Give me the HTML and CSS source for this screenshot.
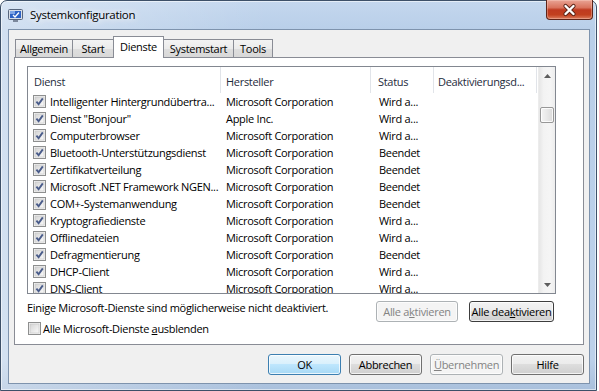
FILE: index.html
```html
<!DOCTYPE html>
<html lang="de">
<head>
<meta charset="utf-8">
<title>Systemkonfiguration</title>
<link rel="stylesheet" href="styles.css">
</head>
<body>
<svg class="defs" width="0" height="0" aria-hidden="true">
  <defs>
    <linearGradient id="cbfill" x1="0" y1="0" x2="1" y2="1">
      <stop offset="0" stop-color="#d4d4d4"/>
      <stop offset="1" stop-color="#fafafa"/>
    </linearGradient>
    <symbol id="box" viewBox="0 0 13 13">
      <rect x="0.5" y="0.5" width="12" height="12" fill="#f4f4f4" stroke="#8e8f8f"/>
      <rect x="2" y="2" width="9" height="9" fill="url(#cbfill)" stroke="#c4c4c4" stroke-width="0.6"/>
    </symbol>
    <symbol id="chk" viewBox="0 0 13 13">
      <use href="#box"/>
      <path d="M3.4 6.6 L5.6 9.2 L9.8 3.4" fill="none" stroke="#4a5c8a" stroke-width="1.9"/>
    </symbol>
  </defs>
</svg>
<div class="window">
  <div class="titlebar">
    <svg class="appicon" width="15" height="14" viewBox="0 0 15 14">
      <rect x="0.5" y="0.5" width="14" height="10" rx="1" fill="#d9dfe8" stroke="#56657d"/>
      <rect x="2" y="2" width="11" height="7" fill="#2e63c4"/>
      <rect x="2" y="2" width="5" height="3" fill="#7fa6e6"/>
      <path d="M5 6 L7 8 L11 3.5" fill="none" stroke="#ffffff" stroke-width="1.3"/>
      <rect x="5" y="11" width="5" height="2" fill="#7c889c"/>
    </svg>
    <span class="title">Systemkonfiguration</span>
    <div class="close">
      <svg width="45" height="18" viewBox="0 0 45 18">
        <path d="M18.5 5 L26.5 13 M26.5 5 L18.5 13" stroke="#5a2418" stroke-width="4.2" stroke-linecap="round"/>
        <path d="M18.5 5 L26.5 13 M26.5 5 L18.5 13" stroke="#ffffff" stroke-width="2.4" stroke-linecap="round"/>
      </svg>
    </div>
  </div>
  <div class="client">
    <div class="tabs">
      <div class="tab t-allg">Allgemein</div>
      <div class="tab t-start">Start</div>
      <div class="tab sel t-dienste">Dienste</div>
      <div class="tab t-sys">Systemstart</div>
      <div class="tab t-tools">Tools</div>
    </div>
    <div class="panel">
      <div class="list">
        <div class="grid">
          <div class="row head">
            <div class="c1">Dienst</div>
            <div class="c2">Hersteller</div>
            <div class="c3">Status</div>
            <div class="c4">Deaktivierungsd...</div>
          </div>
          <div class="row"><div class="c1"><svg class="cb"><use href="#chk"/></svg>Intelligenter Hintergrundübertra...</div><div class="c2">Microsoft Corporation</div><div class="c3">Wird a...</div><div class="c4"></div></div>
          <div class="row"><div class="c1"><svg class="cb"><use href="#chk"/></svg>Dienst "Bonjour"</div><div class="c2">Apple Inc.</div><div class="c3">Wird a...</div><div class="c4"></div></div>
          <div class="row"><div class="c1"><svg class="cb"><use href="#chk"/></svg>Computerbrowser</div><div class="c2">Microsoft Corporation</div><div class="c3">Wird a...</div><div class="c4"></div></div>
          <div class="row"><div class="c1"><svg class="cb"><use href="#chk"/></svg>Bluetooth-Unterstützungsdienst</div><div class="c2">Microsoft Corporation</div><div class="c3">Beendet</div><div class="c4"></div></div>
          <div class="row"><div class="c1"><svg class="cb"><use href="#chk"/></svg>Zertifikatverteilung</div><div class="c2">Microsoft Corporation</div><div class="c3">Beendet</div><div class="c4"></div></div>
          <div class="row"><div class="c1"><svg class="cb"><use href="#chk"/></svg>Microsoft .NET Framework NGEN...</div><div class="c2">Microsoft Corporation</div><div class="c3">Beendet</div><div class="c4"></div></div>
          <div class="row"><div class="c1"><svg class="cb"><use href="#chk"/></svg>COM+-Systemanwendung</div><div class="c2">Microsoft Corporation</div><div class="c3">Beendet</div><div class="c4"></div></div>
          <div class="row"><div class="c1"><svg class="cb"><use href="#chk"/></svg>Kryptografiedienste</div><div class="c2">Microsoft Corporation</div><div class="c3">Wird a...</div><div class="c4"></div></div>
          <div class="row"><div class="c1"><svg class="cb"><use href="#chk"/></svg>Offlinedateien</div><div class="c2">Microsoft Corporation</div><div class="c3">Wird a...</div><div class="c4"></div></div>
          <div class="row"><div class="c1"><svg class="cb"><use href="#chk"/></svg>Defragmentierung</div><div class="c2">Microsoft Corporation</div><div class="c3">Beendet</div><div class="c4"></div></div>
          <div class="row"><div class="c1"><svg class="cb"><use href="#chk"/></svg>DHCP-Client</div><div class="c2">Microsoft Corporation</div><div class="c3">Wird a...</div><div class="c4"></div></div>
          <div class="row"><div class="c1"><svg class="cb"><use href="#chk"/></svg>DNS-Client</div><div class="c2">Microsoft Corporation</div><div class="c3">Wird a...</div><div class="c4"></div></div>
        </div>
        <div class="scrollbar">
          <div class="sb-btn"><svg width="7" height="4" viewBox="0 0 7 4"><path d="M0 4 L3.5 0 L7 4 Z" fill="#5d5d5d"/></svg></div>
          <div class="sb-track"><div class="thumb"></div></div>
          <div class="sb-btn"><svg width="7" height="4" viewBox="0 0 7 4"><path d="M0 0 L3.5 4 L7 0 Z" fill="#5d5d5d"/></svg></div>
        </div>
      </div>
      <div class="note-row">
        <span class="note">Einige Microsoft-Dienste sind möglicherweise nicht deaktiviert.</span>
        <button class="btn disabled w-akt">Alle a<u>k</u>tivieren</button>
        <button class="btn focus w-deakt">Alle dea<u>k</u>tivieren</button>
      </div>
      <div class="hide-row">
        <svg class="cb"><use href="#box"/></svg>
        <span>Alle Microsoft-Dienste <u>a</u>usblenden</span>
      </div>
    </div>
    <div class="buttons">
      <button class="btn default">OK</button>
      <button class="btn">Abbrechen</button>
      <button class="btn disabled"><u>Ü</u>bernehmen</button>
      <button class="btn">Hilfe</button>
    </div>
  </div>
</div>
</body>
</html>
```

FILE: styles.css
```css
* { box-sizing: border-box; }
html, body { margin: 0; padding: 0; }
body {
  width: 599px;
  height: 391px;
  overflow: hidden;
  background: #ffffff;
  font-family: "Open Sans", "Noto Sans", sans-serif;
  font-size: 11px;
  letter-spacing: -0.3px;
  color: #000;
}
.defs { position: absolute; width: 0; height: 0; }

.window {
  width: 597px;
  height: 391px;
  border: 1px solid #3d5068;
  border-radius: 7px 7px 0 0;
  background:
    linear-gradient(to right, rgba(255,255,255,0.35), rgba(255,255,255,0) 45%),
    linear-gradient(to bottom, #c4d7ee 0px, #b9cfe9 28px, #bcd1ea 92%, #a9c0dc 100%);
  box-shadow: inset 0 0 0 1px rgba(255,255,255,0.55);
  display: flex;
  flex-direction: column;
}

.titlebar {
  height: 28px;
  display: flex;
  align-items: flex-start;
  flex: none;
}
.appicon { margin: 8px 0 0 7px; flex: none; }
.title {
  margin-left: 7px;
  line-height: 28px;
  font-size: 11.5px;
  text-shadow: 0 0 6px #fff, 0 0 10px rgba(255,255,255,0.9);
}
.close {
  margin: -1px 3px 0 auto;
  width: 47px;
  height: 20px;
  border: 1px solid #5e2419;
  border-top: none;
  border-radius: 0 0 4px 4px;
  background: linear-gradient(to bottom, #e9a495 0%, #d9735d 40%, #bf3a20 52%, #c2401f 78%, #dc7d5e 100%);
  box-shadow: inset 0 0 0 1px rgba(255,220,210,0.35);
  display: flex;
  align-items: center;
  justify-content: center;
}

.client {
  flex: none;
  height: 355px;
  margin: 0 6px 0 7px;
  border: 1px solid #7e93ad;
  background: #f0f0f0;
  padding: 6px 5px 8px 5px;
  display: flex;
  flex-direction: column;
}

/* tabs */
.tabs {
  display: flex;
  align-items: flex-end;
  height: 21px;
  padding-left: 1px;
  position: relative;
  z-index: 1;
  flex: none;
}
.tab {
  height: 18px;
  border-top: 1px solid #898c95;
  border-left: 1px solid #898c95;
  background: linear-gradient(to bottom, #f3f3f3 0%, #ebebeb 50%, #dedede 52%, #d8d8d8 100%);
  text-align: center;
  line-height: 17px;
  white-space: nowrap;
}
.tab.sel {
  height: 22px;
  margin-bottom: -1px;
  border-right: 1px solid #898c95;
  background: #ffffff;
  line-height: 19px;
}
.t-allg { width: 57px; }
.t-start { width: 41px; }
.t-dienste { width: 51px; }
.t-sys { width: 69px; border-left: none; }
.t-tools { width: 40px; border-right: 1px solid #898c95; }

/* panel */
.panel {
  flex: none;
  height: 288px;
  border: 1px solid #898c95;
  background: #ffffff;
  padding: 8px 0 0 12px;
  display: flex;
  flex-direction: column;
}

.list {
  width: 529px;
  height: 228px;
  border: 1px solid #828790;
  display: flex;
  overflow: hidden;
  flex: none;
}
.grid {
  width: 510px;
  overflow: hidden;
}
.row {
  display: grid;
  grid-template-columns: 193px 150px 63px 103px;
  height: 17px;
  line-height: 17px;
  white-space: nowrap;
}
.row > div { overflow: hidden; }
.row .c1 { padding-left: 5px; display: flex; align-items: center; }
.row .c2 { padding-left: 5px; }
.row .c3 { padding-left: 8px; }
.row .c4 { padding-left: 4px; }
.row.head {
  height: 26px;
  padding-top: 2px;
  line-height: 26px;
  color: #1e2b3c;
}
.row.head > div { border-right: 1px solid #e1e4e9; margin-top: -2px; padding-top: 2px; }
.row.head .c1 { padding-left: 6px; display: block; }
.row.head .c3 { padding-left: 7px; }

.cb { width: 13px; height: 13px; flex: none; }
.row .cb { margin-right: 4px; }

.scrollbar {
  width: 17px;
  margin-left: auto;
  display: flex;
  flex-direction: column;
  background: linear-gradient(to right, #e6e6e6 0%, #f3f3f3 30%, #f5f5f5 70%, #ededed 100%);
  border-left: 1px solid #ececec;
}
.sb-btn {
  height: 17px;
  display: flex;
  align-items: center;
  justify-content: center;
  flex: none;
}
.sb-track { flex: 1; padding: 23px 1px 0 1px; }
.thumb {
  height: 16px;
  border: 1px solid #979797;
  border-radius: 2px;
  background: linear-gradient(to right, #f4f4f4, #e8e8e8 50%, #dadada);
  box-shadow: inset 0 0 0 1px rgba(255,255,255,0.8);
}

.note-row {
  width: 527px;
  height: 21px;
  margin-top: 7px;
  display: flex;
  align-items: flex-start;
  flex: none;
}
.note { line-height: 14px; white-space: nowrap; }

.btn {
  font-family: inherit;
  font-size: 11px;
  letter-spacing: -0.3px;
  color: #000;
  height: 21px;
  padding: 0;
  border: 1px solid #707070;
  border-radius: 3px;
  background: linear-gradient(to bottom, #f2f2f2 0%, #ebebeb 48%, #dddddd 50%, #cfcfcf 100%);
  box-shadow: inset 0 0 0 1px rgba(255,255,255,0.75);
  text-align: center;
  line-height: 19px;
  white-space: nowrap;
}
.btn.disabled {
  border-color: #adb2b5;
  background: #f4f4f4;
  color: #838383;
}
.btn.default {
  border-color: #3c7fb1;
  background: linear-gradient(to bottom, #eaf6fd 0%, #d9f0fc 48%, #bee6fd 50%, #a7d9f5 100%);
}
.btn.focus { border-color: #3d3d3d; }
.w-akt { width: 82px; margin-left: auto; }
.w-deakt { width: 85px; margin-left: 11px; }

.hide-row {
  height: 13px;
  display: flex;
  align-items: center;
  padding-left: 1px;
  flex: none;
}
.hide-row span { margin-left: 2px; line-height: 13px; white-space: nowrap; }

.buttons {
  margin-top: 9px;
  height: 21px;
  display: flex;
  justify-content: flex-end;
  gap: 8px;
  flex: none;
}
.buttons .btn { width: 73px; }
```
